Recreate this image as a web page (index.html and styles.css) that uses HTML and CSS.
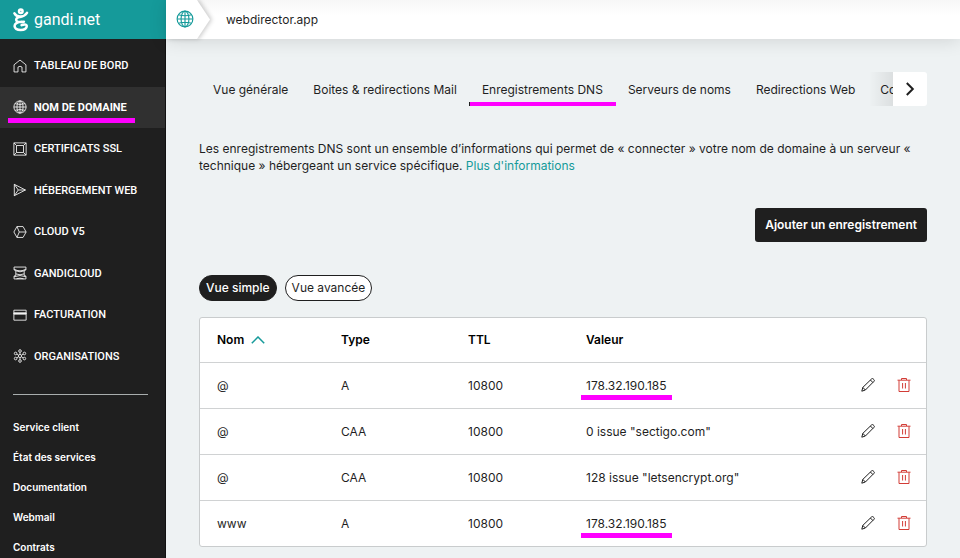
FILE: index.html
```html
<!DOCTYPE html>
<html lang="fr">

<head>
  <meta charset="UTF-8">
  <meta name="viewport" content="width=device-width, initial-scale=1">
  <title>webdirector.app - Enregistrements DNS</title>
  <link rel="stylesheet" href="styles.css">
</head>

<body>
  <!-- shared icons -->
  <svg class="sprite" aria-hidden="true">
    <symbol id="globe" viewBox="0 0 16 16">
      <circle cx="8" cy="8" r="7" />
      <ellipse cx="8" cy="8" rx="3.5" ry="7" />
      <path d="M8 1v14M1 8h14M2.2 4.2Q8 6 13.8 4.2M2.2 11.8Q8 10 13.8 11.8" />
    </symbol>
    <symbol id="pencil" viewBox="0 0 16 16">
      <path d="M1.8 14.2l1-3.8L11.6 1.9q.8-.7 1.6 0l.8.8q.8.8 0 1.6L5.4 13zM2.8 10.4L5.4 13M10.4 3l2.5 2.5" />
    </symbol>
    <symbol id="trash" viewBox="0 0 16 16">
      <path d="M1.5 3.2h13M5.5 3V1.5h5V3M3 3.4v11.1h10V3.4M6.6 6v5.5M9.4 6v5.5" />
    </symbol>
  </svg>

  <div class="layout">
    <aside class="sidebar">
      <a class="logo" href="#">
        <svg class="logo_icon" viewBox="0 0 16 24" aria-hidden="true">
          <circle cx="7.8" cy="3.2" r="1.8" />
          <path d="M1.4 5.3Q3 8.7 7.4 8.5T14 4.8M8.8 8.7C4.8 8.8 3 10.4 3.2 12.1c.3 2.2 3.2 2.3 7.7 1.6M8.8 13.8c-4.5.2-7.4 1.7-7.2 4.4.2 2.5 2.8 3.9 6.2 3.9 3.7 0 6.2-1.8 5.9-4.4-.2-1.6-2.6-1.7-5.1-.5" />
        </svg>
        <span>gandi.net</span>
      </a>

      <nav>
        <ul class="menu">
          <li><a href="#">
            <svg class="icon" viewBox="0 0 16 16"><path d="M1.2 6.6L8 1.2l6.8 5.4v8.2h-4.5V9.2Q8 7.4 5.7 9.2v5.6H1.2z" /></svg>
            TABLEAU DE BORD</a></li>
          <li class="active"><a href="#" aria-current="page">
            <svg class="icon"><use href="#globe" /></svg>
            <span class="marker">NOM DE DOMAINE</span></a></li>
          <li><a href="#">
            <svg class="icon" viewBox="0 0 16 16"><path d="M1 1h14v14H1zM4 4h8v8H4zM1 1l3 3M15 1l-3 3M1 15l3-3M15 15l-3-3" /></svg>
            CERTIFICATS SSL</a></li>
          <li><a href="#">
            <svg class="icon" viewBox="0 0 16 16"><path d="M1.5 1.5L14.2 8 1.5 14.5zM1.5 1.5L6 8l-4.5 6.5M6 8h8.2" /></svg>
            HÉBERGEMENT WEB</a></li>
          <li><a href="#">
            <svg class="icon" viewBox="0 0 16 16"><path d="M4.5 1.8h7L15 8l-3.5 6.2h-7L1 8zM4.5 1.8L7.2 8l-2.7 6.2M7.2 8H15" /></svg>
            CLOUD V5</a></li>
          <li><a href="#">
            <svg class="icon" viewBox="0 0 16 16"><path d="M1.2 1.2h13.6v3.3l-2 .8v5.4l2 .8v3.3H1.2v-3.3l2-.8V5.3l-2-.8zM1.2 3.6Q8 7.5 14.8 3.6M3.2 5.5Q8 7.8 12.8 5.5M3.2 9Q8 11 12.8 9M1.2 12.3Q8 9.5 14.8 12.3M4 14.6q4-1.4 8 0" /></svg>
            GANDICLOUD</a></li>
          <li><a href="#">
            <svg class="icon" viewBox="0 0 16 16"><path d="M1 2.5h14v11.4H1z" /><path class="fill" d="M1 5.5h14v1.5H1z" /></svg>
            FACTURATION</a></li>
          <li><a href="#">
            <svg class="icon" viewBox="0 0 16 16">
              <circle cx="8" cy="8" r="1.8" /><circle cx="8" cy="2.3" r="1.5" /><circle cx="8" cy="13.7" r="1.5" />
              <circle cx="3" cy="5.1" r="1.5" /><circle cx="13" cy="5.1" r="1.5" /><circle cx="3" cy="10.9" r="1.5" /><circle cx="13" cy="10.9" r="1.5" />
              <path d="M8 3.8v2.4M8 9.8v2.4M4.3 5.9l2.1 1.2M11.7 5.9L9.6 7.1M4.3 10.1l2.1-1.2M11.7 10.1L9.6 8.9" />
            </svg>
            ORGANISATIONS</a></li>
        </ul>

        <ul class="links">
          <li><a href="#">Service client</a></li>
          <li><a href="#">État des services</a></li>
          <li><a href="#">Documentation</a></li>
          <li><a href="#">Webmail</a></li>
          <li><a href="#">Contrats</a></li>
        </ul>
      </nav>
    </aside>

    <div class="page">
      <header class="topbar">
        <a class="crumb" href="#" aria-label="Nom de domaine">
          <svg class="crumb_icon"><use href="#globe" /></svg>
        </a>
        <span>webdirector.app</span>
      </header>

      <main class="content">
        <div class="tabs">
          <nav class="tab_list">
            <a href="#">Vue générale</a>
            <a href="#">Boites &amp; redirections Mail</a>
            <a href="#" class="marker" aria-current="page">Enregistrements DNS</a>
            <a href="#">Serveurs de noms</a>
            <a href="#">Redirections Web</a>
            <a href="#">Co</a>
          </nav>
          <button type="button" class="next" aria-label="Suivant">
            <svg viewBox="0 0 16 16"><path d="M4.8 2l6 6-6 6" /></svg>
          </button>
        </div>

        <p class="intro">Les enregistrements DNS sont un ensemble d’informations qui permet de « connecter » votre nom de domaine à un serveur « technique » hébergeant un service spécifique. <a href="#">Plus d'informations</a></p>

        <button type="button" class="add">Ajouter un enregistrement</button>

        <div class="views">
          <button type="button" class="view selected">Vue simple</button>
          <button type="button" class="view">Vue avancée</button>
        </div>

        <div class="table_box">
          <table>
            <thead>
              <tr>
                <th class="col_name">Nom
                  <svg class="sort" viewBox="0 0 14 8"><path d="M.8 7.2L7 1l6.2 6.2" /></svg>
                </th>
                <th class="col_type">Type</th>
                <th class="col_ttl">TTL</th>
                <th>Valeur</th>
                <td class="col_actions"></td>
              </tr>
            </thead>
            <tbody>
              <tr>
                <td>@</td>
                <td>A</td>
                <td>10800</td>
                <td><span class="marker">178.32.190.185</span></td>
                <td><div class="actions">
                  <button type="button" class="edit" aria-label="Modifier"><svg><use href="#pencil" /></svg></button>
                  <button type="button" class="delete" aria-label="Supprimer"><svg><use href="#trash" /></svg></button>
                </div></td>
              </tr>
              <tr>
                <td>@</td>
                <td>CAA</td>
                <td>10800</td>
                <td>0 issue "sectigo.com"</td>
                <td><div class="actions">
                  <button type="button" class="edit" aria-label="Modifier"><svg><use href="#pencil" /></svg></button>
                  <button type="button" class="delete" aria-label="Supprimer"><svg><use href="#trash" /></svg></button>
                </div></td>
              </tr>
              <tr>
                <td>@</td>
                <td>CAA</td>
                <td>10800</td>
                <td>128 issue "letsencrypt.org"</td>
                <td><div class="actions">
                  <button type="button" class="edit" aria-label="Modifier"><svg><use href="#pencil" /></svg></button>
                  <button type="button" class="delete" aria-label="Supprimer"><svg><use href="#trash" /></svg></button>
                </div></td>
              </tr>
              <tr>
                <td>www</td>
                <td>A</td>
                <td>10800</td>
                <td><span class="marker">178.32.190.185</span></td>
                <td><div class="actions">
                  <button type="button" class="edit" aria-label="Modifier"><svg><use href="#pencil" /></svg></button>
                  <button type="button" class="delete" aria-label="Supprimer"><svg><use href="#trash" /></svg></button>
                </div></td>
              </tr>
            </tbody>
          </table>
        </div>
      </main>
    </div>
  </div>
</body>

</html>
```
FILE: styles.css
```css
* {
  box-sizing: border-box;
  margin: 0;
  padding: 0;
}

body {
  font-family: Inter, "Liberation Sans", sans-serif;
  font-size: 12px;
  line-height: 17px;
  color: #1f1f1f;
  background-color: #eef2f3;
}

ul {
  list-style: none;
}

a {
  color: inherit;
  text-decoration: none;
}

button {
  font: inherit;
  color: inherit;
  border: 0;
  background: none;
  cursor: pointer;
}

svg {
  fill: none;
  stroke: currentColor;
}

.sprite {
  position: absolute;
  width: 0;
  height: 0;
}

.layout {
  display: flex;
  height: 100vh;
  overflow: hidden;
}

/* pink highlight under a text */
.marker {
  position: relative;
}

.marker::after {
  content: "";
  position: absolute;
  left: -5px;
  right: -5px;
  bottom: -7px;
  height: 5px;
  background-color: #ff00ff;
}

/* sidebar */
.sidebar {
  flex: 0 0 166px;
  color: #fff;
  background-color: #1f1f1f;
  border-right: 1px solid #111;
}

.logo {
  display: flex;
  align-items: center;
  gap: 5px;
  height: 39px;
  margin-right: -1px;
  padding-left: 13px;
  font-family: Roboto, sans-serif;
  font-size: 16px;
  background-color: #159a9a;
}

.logo_icon {
  width: 16px;
  height: 24px;
  stroke-width: 2.5;
  stroke-linecap: round;
}

.menu {
  display: flex;
  flex-direction: column;
  height: 332px;
  margin-top: 6px;
  font-family: Roboto, sans-serif;
  font-size: 11px;
  font-weight: 500;
}

.menu li {
  flex: 1;
}

.menu a {
  display: flex;
  align-items: center;
  gap: 7px;
  height: 100%;
  padding-left: 13px;
}

.menu .active {
  font-weight: 700;
  background-color: #303030;
}

.menu .marker::after {
  left: -26px;
  right: -8px;
}

.icon {
  width: 14px;
  height: 14px;
  color: #f2f2f2;
}

.icon .fill {
  fill: currentColor;
}

.links {
  margin: 17px 17px 0 13px;
  padding-top: 17px;
  border-top: 1px solid #a8adad;
  font-size: 10px;
  font-weight: 600;
}

.links a {
  display: block;
  line-height: 30px;
}

/* top bar */
.page {
  flex: 1;
  min-width: 0;
}

.topbar {
  position: relative;
  display: flex;
  align-items: center;
  gap: 16px;
  height: 39px;
  background: linear-gradient(#f7f7f7, #fff 16px);
  box-shadow: 0 2px 18px rgba(0, 0, 0, 0.12);
}

.crumb {
  filter: drop-shadow(2px 0 2px rgba(0, 0, 0, 0.2));
}

.crumb_icon {
  display: block;
  width: 44px;
  height: 39px;
  padding: 10px 16px 11px 10px;
  color: #159a9a;
  background-color: #fff;
  clip-path: polygon(0 0, 31px 0, 100% 50%, 31px 100%, 0 100%);
}

/* content */
.content {
  padding: 33px 33px 12px;
}

.tabs {
  display: flex;
  height: 34px;
}

.tab_list {
  position: relative;
  flex: 1;
  min-width: 0;
  display: flex;
  align-items: center;
  gap: 25px;
  padding-left: 14px;
  overflow: hidden;
  white-space: nowrap;
}

.tab_list::after {
  content: "";
  position: absolute;
  top: 0;
  right: 0;
  width: 24px;
  height: 100%;
  background: linear-gradient(to right, transparent, rgba(0, 0, 0, 0.08));
}

.tab_list .marker::after {
  left: -13px;
  right: -13px;
  bottom: -9px;
  border-left: 1px solid #1f1f1f;
}

.next {
  width: 34px;
  border-radius: 0 3px 3px 0;
  background-color: #fff;
}

.next svg {
  display: block;
  width: 16px;
  height: 16px;
  margin: 0 auto;
  stroke-width: 2;
}

.intro {
  margin-top: 34px;
}

.intro a {
  color: #159a9a;
}

.add {
  display: block;
  margin: 34px 0 0 auto;
  padding: 8px 10px 9px;
  font-weight: 600;
  color: #fff;
  border-radius: 3px;
  background-color: #1f1f1f;
}

.views {
  display: flex;
  gap: 8px;
  margin-top: 33px;
}

.view {
  padding: 3px 6px;
  line-height: 18px;
  border: 1px solid #1f1f1f;
  border-radius: 13px;
  background-color: #fff;
}

.view.selected {
  font-weight: 500;
  color: #fff;
  background-color: #1f1f1f;
}

.table_box {
  margin-top: 16px;
  border: 1px solid #c9cccd;
  border-radius: 3px;
  background-color: #fff;
}

table {
  width: 100%;
  table-layout: fixed;
  border-collapse: collapse;
}

th,
td {
  height: 46px;
  padding-left: 17px;
  text-align: left;
}

thead th,
thead td {
  height: 44px;
}

tbody tr {
  border-top: 1px solid #d0d2d3;
}

th {
  font-weight: 600;
  color: #000;
}

.col_name {
  width: 124px;
}

.col_type {
  width: 127px;
}

.col_ttl {
  width: 118px;
}

.col_actions {
  width: 83px;
}

.sort {
  width: 14px;
  height: 8px;
  margin-left: 4px;
  color: #159a9a;
  stroke-width: 1.5;
}

.actions {
  display: flex;
  gap: 20px;
}

.actions svg {
  display: block;
  width: 16px;
  height: 16px;
}

.delete {
  color: #d23c36;
}
```
